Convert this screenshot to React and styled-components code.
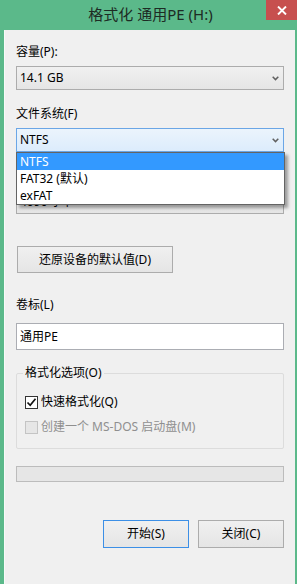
import React from "react";
import styled, { createGlobalStyle } from "styled-components";

const Global = createGlobalStyle`
  html, body { margin: 0; padding: 0; }
  body {
    width: 297px;
    height: 584px;
    overflow: hidden;
    background: #5bb98a;
    font-family: "Noto Sans", "Noto Sans CJK SC", sans-serif;
  }
  * { box-sizing: border-box; }
`;

const Window = styled.div`
  width: 297px;
  height: 584px;
  background: #5bb98a;
  display: flex;
  flex-direction: column;
`;

const TitleBar = styled.div`
  position: relative;
  height: 30px;
  flex: none;
  display: flex;
  align-items: center;
  justify-content: center;
  padding-left: 4px;
`;

const Title = styled.div`
  font-size: 15px;
  line-height: 20px;
  color: #1d2b24;
  margin-top: -2px;
`;

const CloseButton = styled.div`
  position: absolute;
  top: 0;
  right: 0;
  width: 31px;
  height: 20px;
  background: #c7504f;
  display: flex;
  align-items: center;
  justify-content: center;
`;

const Body = styled.div`
  flex: 1;
  margin: 0 2px 0 4px;
  background: #f0f0f0;
  border-left: 1px solid #f7faf8;
  padding: 0 11px 0 11px;
  display: flex;
  flex-direction: column;
  font-size: 12px;
  color: #000;
`;

const Label = styled.div`
  font-size: 12px;
  line-height: 16px;
  height: 16px;
  margin-top: ${(p) => p.$mt}px;
  visibility: ${(p) => (p.$covered ? "hidden" : "visible")};
`;

const ComboWrap = styled.div`
  position: relative;
  margin-top: 6px;
`;

const Select = styled.div`
  height: 24px;
  border: 1px solid ${(p) => (p.$open ? "#6ba6e6" : "#acacac")};
  background: ${(p) =>
    p.$open
      ? "linear-gradient(#ebf4fc, #dcecfc)"
      : "linear-gradient(#f0f0f0, #e5e5e5)"};
  display: flex;
  align-items: center;
  justify-content: space-between;
  padding: 0 4px 0 3px;
  font-size: 12px;
  line-height: 16px;
`;

const DropList = styled.ul`
  position: absolute;
  top: 100%;
  left: 0;
  width: 269px;
  margin: 0;
  padding: 0;
  list-style: none;
  background: #fff;
  border: 1px solid #646464;
  box-shadow: 3px 3px 3px rgba(0, 0, 0, 0.35);
  z-index: 2;
`;

const Option = styled.li`
  height: 17px;
  line-height: 17px;
  padding-left: 3px;
  font-size: 12px;
  background: ${(p) => (p.$active ? "#3399ff" : "transparent")};
  color: ${(p) => (p.$active ? "#fff" : "#000")};
`;

const Button = styled.button`
  height: ${(p) => p.$h}px;
  width: ${(p) => p.$w}px;
  margin: 0;
  padding: 0;
  border: 1px solid ${(p) => (p.$default ? "#3c8fe6" : "#acacac")};
  background: linear-gradient(#f0f0f0, #e5e5e5);
  font-family: inherit;
  font-size: 12px;
  line-height: 16px;
  color: #000;
`;

const ResetButton = styled(Button)`
  margin-top: 32px;
  margin-left: 1px;
`;

const TextBox = styled.div`
  margin-top: 10px;
  height: 27px;
  background: #fff;
  border: 1px solid #abadb3;
  display: flex;
  align-items: center;
  padding-left: 3px;
  font-size: 12px;
  line-height: 16px;
`;

const Group = styled.fieldset`
  margin: 15px 0 0 0;
  min-width: 0;
  border: 1px solid #dcdcdc;
  border-radius: 2px;
  padding: 13px 8px 13px 8px;
`;

const Legend = styled.legend`
  padding: 0 2px;
  margin-left: -2px;
  font-size: 12px;
  line-height: 16px;
`;

const Options = styled.div`
  display: flex;
  flex-direction: column;
  gap: 9px;
`;

const CheckRow = styled.div`
  display: flex;
  align-items: center;
  gap: 3px;
  height: 16px;
  font-size: 12px;
  line-height: 16px;
  color: ${(p) => (p.$disabled ? "#8f8f8f" : "#000")};
`;

const Box = styled.span`
  flex: none;
  width: 13px;
  height: 13px;
  border: 1px solid ${(p) => (p.$disabled ? "#c4c4c4" : "#333")};
  background: ${(p) => (p.$disabled ? "#e6e6e6" : "#fff")};
  display: flex;
  align-items: center;
  justify-content: center;
`;

const Progress = styled.div`
  margin-top: 17px;
  height: 16px;
  border: 1px solid #bcbcbc;
  background: #e6e6e6;
`;

const ButtonRow = styled.div`
  margin-top: 38px;
  display: flex;
  justify-content: flex-end;
  gap: 9px;
`;

const Chevron = () => (
  <svg width="7" height="5" viewBox="0 0 7 5">
    <path d="M0.7 0.8 L3.5 3.6 L6.3 0.8" fill="none" stroke="#606060" strokeWidth="1.5" />
  </svg>
);

const CloseX = () => (
  <svg width="10" height="9" viewBox="0 0 10 9">
    <path d="M1 0.5 L9 8.5 M9 0.5 L1 8.5" stroke="#fff" strokeWidth="1.9" />
  </svg>
);

const Tick = () => (
  <svg width="11" height="11" viewBox="0 0 11 11">
    <path d="M1.5 5.5 L4.2 8.3 L9.5 1.8" fill="none" stroke="#111" strokeWidth="1.7" />
  </svg>
);

export default function App() {
  return (
    <>
      <Global />
      <Window>
        <TitleBar>
          <Title>格式化 通用PE (H:)</Title>
          <CloseButton>
            <CloseX />
          </CloseButton>
        </TitleBar>
        <Body>
          <Label $mt={14}>容量(P):</Label>
          <ComboWrap>
            <Select>
              <span>14.1 GB</span>
              <Chevron />
            </Select>
          </ComboWrap>

          <Label $mt={16}>文件系统(F)</Label>
          <ComboWrap>
            <Select $open>
              <span>NTFS</span>
              <Chevron />
            </Select>
            <DropList>
              <Option $active>NTFS</Option>
              <Option>FAT32 (默认)</Option>
              <Option>exFAT</Option>
            </DropList>
          </ComboWrap>

          <Label $mt={16} $covered>分配单元大小(A)</Label>
          <ComboWrap>
            <Select>
              <span>4096 字节</span>
              <Chevron />
            </Select>
          </ComboWrap>

          <ResetButton $w={156} $h={27}>还原设备的默认值(D)</ResetButton>

          <Label $mt={24}>卷标(L)</Label>
          <TextBox>通用PE</TextBox>

          <Group>
            <Legend>格式化选项(O)</Legend>
            <Options>
              <CheckRow>
                <Box>
                  <Tick />
                </Box>
                快速格式化(Q)
              </CheckRow>
              <CheckRow $disabled>
                <Box $disabled />
                创建一个 MS-DOS 启动盘(M)
              </CheckRow>
            </Options>
          </Group>

          <Progress />

          <ButtonRow>
            <Button $default $w={86} $h={28}>开始(S)</Button>
            <Button $w={86} $h={28}>关闭(C)</Button>
          </ButtonRow>
        </Body>
      </Window>
    </>
  );
}
